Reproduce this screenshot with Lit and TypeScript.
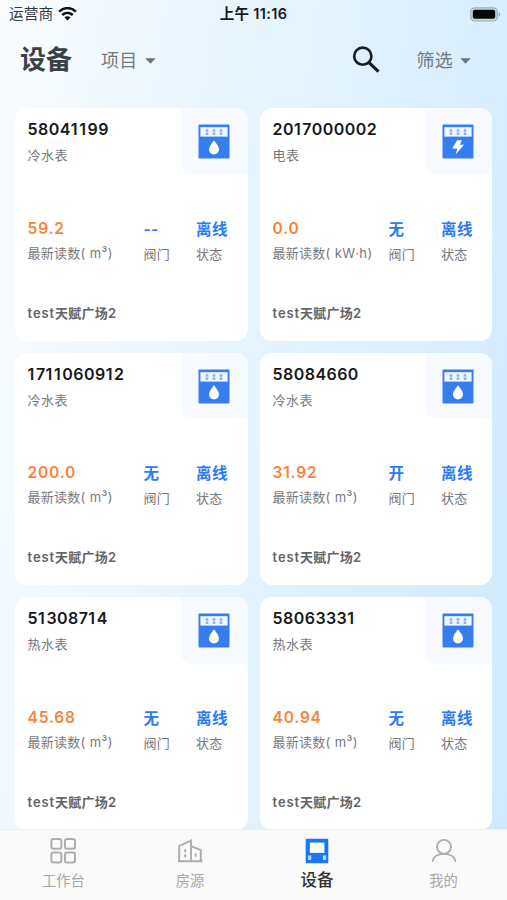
import { LitElement, html, css, svg } from "lit";
import { customElement, property } from "lit/decorators.js";

interface Device {
  id: string;
  type: string;
  value: string;
  unit: string;
  valve: string;
  electric?: boolean;
}

const devices: Device[] = [
  { id: "58041199", type: "冷水表", value: "59.2", unit: "m³", valve: "--" },
  { id: "2017000002", type: "电表", value: "0.0", unit: "kW·h", valve: "无", electric: true },
  { id: "1711060912", type: "冷水表", value: "200.0", unit: "m³", valve: "无" },
  { id: "58084660", type: "冷水表", value: "31.92", unit: "m³", valve: "开" },
  { id: "51308714", type: "热水表", value: "45.68", unit: "m³", valve: "无" },
  { id: "58063331", type: "热水表", value: "40.94", unit: "m³", valve: "无" },
];

const drop = svg`<path d="M16 16.2C18 19.3 21 22.2 21 25.4a5 5.1 0 0 1-10 0C11 22.2 14 19.3 16 16.2Z" fill="#fff"/>`;
const bolt = svg`<path d="M15.2 16.2H20L17.8 20.7H22L13.6 30.6L15.4 24.4H10.2Z" fill="#fff"/>`;

// The digit 1 is narrow in Inter; give it extra room so serial numbers stay evenly spaced.
const digits = (text: string) =>
  [...text].map((c) => (c === "1" ? html`<span class="one">1</span>` : c));

@customElement("device-card")
export class DeviceCard extends LitElement {
  @property({ attribute: false }) device!: Device;

  static styles = css`
    :host {
      display: flex;
      flex-direction: column;
      height: 232.5px;
      border-radius: 12px;
      background: #fff;
      overflow: hidden;
      white-space: nowrap;
    }
    .top {
      display: flex;
      justify-content: space-between;
      height: 66.5px;
    }
    .names {
      padding: 11px 0 0 13px;
    }
    .id {
      font-size: 16px;
      line-height: 20px;
      font-weight: 600;
      letter-spacing: 0.42px;
      color: #17181a;
    }
    .one {
      letter-spacing: 1.6px;
    }
    .type {
      margin-top: 6px;
      font-size: 13px;
      line-height: 20px;
      letter-spacing: 0.4px;
      color: #77797c;
    }
    .badge {
      box-sizing: border-box;
      width: 66.5px;
      padding: 16px 0 0 16.5px;
      border-bottom-left-radius: 11px;
      background: #f7faff;
    }
    .badge svg {
      display: block;
    }
    .stats {
      display: grid;
      grid-template-columns: 116px 52.5px 1fr;
      margin-top: 43px;
      padding-left: 13px;
    }
    .value {
      font-size: 15.5px;
      line-height: 22px;
      font-weight: 600;
      letter-spacing: 0.3px;
      color: #2b7bf3;
    }
    .reading {
      color: #f8843a;
      letter-spacing: 0.8px;
    }
    .label {
      margin-top: 2px;
      font-size: 13px;
      line-height: 22px;
      letter-spacing: 0.2px;
      color: #77797c;
    }
    .unit {
      letter-spacing: 0.45px;
    }
    .low {
      position: relative;
      top: 1px;
    }
    .place {
      margin-top: 39px;
      padding-left: 13px;
      font-size: 13px;
      line-height: 20px;
      font-weight: 600;
      letter-spacing: 0.3px;
      color: #636466;
    }
    .latin {
      letter-spacing: 0.85px;
    }
  `;

  render() {
    const d = this.device;
    return html`
      <div class="top">
        <div class="names">
          <div class="id">${digits(d.id)}</div>
          <div class="type">${d.type}</div>
        </div>
        <div class="badge">
          <svg width="32" height="35" viewBox="0 0 32 35">
            <rect x=".5" y=".5" width="31" height="34" rx="1" fill="#367eee" />
            <rect x="2.4" y="3.2" width="27.2" height="9.4" fill="#f2f7ff" />
            <path d="M9 5.2v5.8M16 5.2v5.8M23 5.2v5.8" stroke="#86b1f4" stroke-width="2.6" stroke-dasharray="2.6 .6" />
            ${d.electric ? bolt : drop}
          </svg>
        </div>
      </div>
      <div class="stats">
        <div>
          <div class="value reading">${d.value}</div>
          <div class="label">最新读数<span class="unit">( ${d.unit})</span></div>
        </div>
        <div>
          <div class="value low">${d.valve}</div>
          <div class="label low">阀门</div>
        </div>
        <div>
          <div class="value low">离线</div>
          <div class="label low">状态</div>
        </div>
      </div>
      <div class="place"><span class="latin">test</span>天赋广场2</div>
    `;
  }
}

const icons = {
  work: svg`<g fill="none" stroke="#adadad" stroke-width="2"><rect x="2.4" y="2" width="10" height="9.8" rx="2.2"/><rect x="16" y="2" width="10" height="9.8" rx="2.2"/><rect x="2.4" y="15.6" width="10" height="9.8" rx="2.2"/><rect x="16" y="15.6" width="10" height="9.8" rx="2.2"/></g>`,
  house: svg`<g fill="none" stroke="#adadad" stroke-width="1.9"><path d="M2 24.2H26.4M3.2 24.2V9L15 3.6V24.2M15 9.2L24.8 13.2V24.2"/><path d="M9.2 12.2v3M9.2 17.2v3M19.6 16.4v3.4" stroke-width="2"/></g>`,
  device: svg`<rect x="2.7" y="1.8" width="22.6" height="24.4" rx="1" fill="#1677fa"/><path d="M6.8 5.6H21.4V15.9H6.8Z" fill="#fff"/><path d="M5 18.4h3.2v4.6H5zM20 18.4h3.2v4.6H20z" fill="#c5dcff"/>`,
  mine: svg`<g fill="none" stroke="#adadad" stroke-width="1.8"><circle cx="14" cy="9.8" r="7"/><path d="M2.6 24.8C3.3 19.6 8 16.9 14 16.9S24.8 19.6 25.5 24.8"/></g>`,
};

const tabs = [
  { name: "工作台", icon: icons.work, cls: "tab" },
  { name: "房源", icon: icons.house, cls: "tab" },
  { name: "设备", icon: icons.device, cls: "tab active" },
  { name: "我的", icon: icons.mine, cls: "tab" },
];

@customElement("app-root")
export class AppRoot extends LitElement {
  static styles = css`
    :host {
      display: flex;
      flex-direction: column;
      width: 507px;
      height: 900px;
      overflow: hidden;
      font-family: Inter, "Noto Sans CJK SC", sans-serif;
      background: linear-gradient(97deg, #f9fcfe 0%, #e6f4fd 45%, #d1e9fd 100%);
    }
    .status {
      display: grid;
      grid-template-columns: 1fr auto 1fr;
      align-items: center;
      height: 28px;
      padding: 0 6px 0 9px;
      color: #15191c;
      font-size: 15px;
      line-height: 20px;
    }
    .carrier {
      display: flex;
      align-items: center;
      gap: 5px;
      color: #33383c;
      font-size: 14.7px;
    }
    .time {
      font-weight: 600;
      font-size: 14.5px;
      letter-spacing: 0.35px;
      margin-right: 3px;
    }
    .battery {
      justify-self: end;
    }
    .header {
      display: flex;
      align-items: center;
      height: 64px;
      padding: 0 36px 0 20px;
      color: #74797d;
      font-size: 18px;
      letter-spacing: 0.3px;
    }
    .title {
      margin: 0 29px 0 0;
      font-size: 26px;
      line-height: 34px;
      font-weight: 600;
      letter-spacing: 0;
      color: #3b4046;
    }
    .drop {
      display: flex;
      align-items: center;
      gap: 7px;
      line-height: 26px;
      padding-top: 2px;
    }
    .search {
      margin: 0 36px 0 auto;
    }
    .grid {
      flex: 1;
      min-height: 0;
      display: grid;
      grid-template-columns: 233px 232px;
      grid-auto-rows: 232.5px;
      gap: 12px;
      padding: 16px 15px 0 14.6px;
    }
    .tabs {
      display: grid;
      grid-template-columns: repeat(4, 1fr);
      height: 70px;
      flex: none;
      background: #fafafa;
      box-shadow: 0 -1px 0 #e9eff3;
    }
    .tab {
      display: flex;
      flex-direction: column;
      align-items: center;
      padding-top: 7px;
      font-size: 14.3px;
      line-height: 22px;
      color: #a8a8a8;
      gap: 5px;
    }
    .active {
      font-size: 16.5px;
      font-weight: 500;
      color: #333;
      gap: 4px;
    }
    svg {
      display: block;
      flex: none;
    }
  `;

  render() {
    const caret = html`<svg width="11" height="6" viewBox="0 0 11 6"><path d="M.3.3H10.7L5.5 5.7Z" fill="#6f7478" /></svg>`;
    return html`
      <div class="status">
        <div class="carrier">
          运营商
          <svg width="19" height="14" viewBox="0 0 19 14">
            <g fill="none" stroke="#0c1013" stroke-width="2.5">
              <path d="M1.1 4.7C6-.1 13-.1 17.9 4.7" />
              <path d="M4.2 8C7.3 5.2 11.7 5.2 14.8 8" />
            </g>
            <path d="M6.4 10.3C8.2 8.8 10.8 8.8 12.6 10.3L9.5 13.4Z" fill="#0c1013" />
          </svg>
        </div>
        <div class="time">上午 11:16</div>
        <svg class="battery" width="31" height="15" viewBox="0 0 31 15">
          <rect x=".8" y=".8" width="26.4" height="13" rx="3.8" fill="#c6dce9" stroke="#9fb0ba" stroke-width="1.3" />
          <rect x="2.8" y="2.8" width="22.4" height="9" rx="2" fill="#050708" />
          <path d="M28.6 5.2C30.8 5.6 30.8 9 28.6 9.4Z" fill="#9fb0ba" />
        </svg>
      </div>
      <div class="header">
        <h1 class="title">设备</h1>
        <div class="drop">项目 ${caret}</div>
        <svg class="search" width="28" height="28" viewBox="0 0 28 28">
          <circle cx="10.8" cy="10.2" r="8.6" fill="none" stroke="#171c20" stroke-width="2.6" />
          <path d="M16.8 16.4L26.5 25.6" stroke="#171c20" stroke-width="3.2" />
        </svg>
        <div class="drop">筛选 ${caret}</div>
      </div>
      <div class="grid">${devices.map((d) => html`<device-card .device=${d}></device-card>`)}</div>
      <div class="tabs">
        ${tabs.map(
          (t) => html`<div class=${t.cls}>
            <svg width="28" height="28" viewBox="0 0 28 28">${t.icon}</svg>
            <span>${t.name}</span>
          </div>`
        )}
      </div>
    `;
  }
}
